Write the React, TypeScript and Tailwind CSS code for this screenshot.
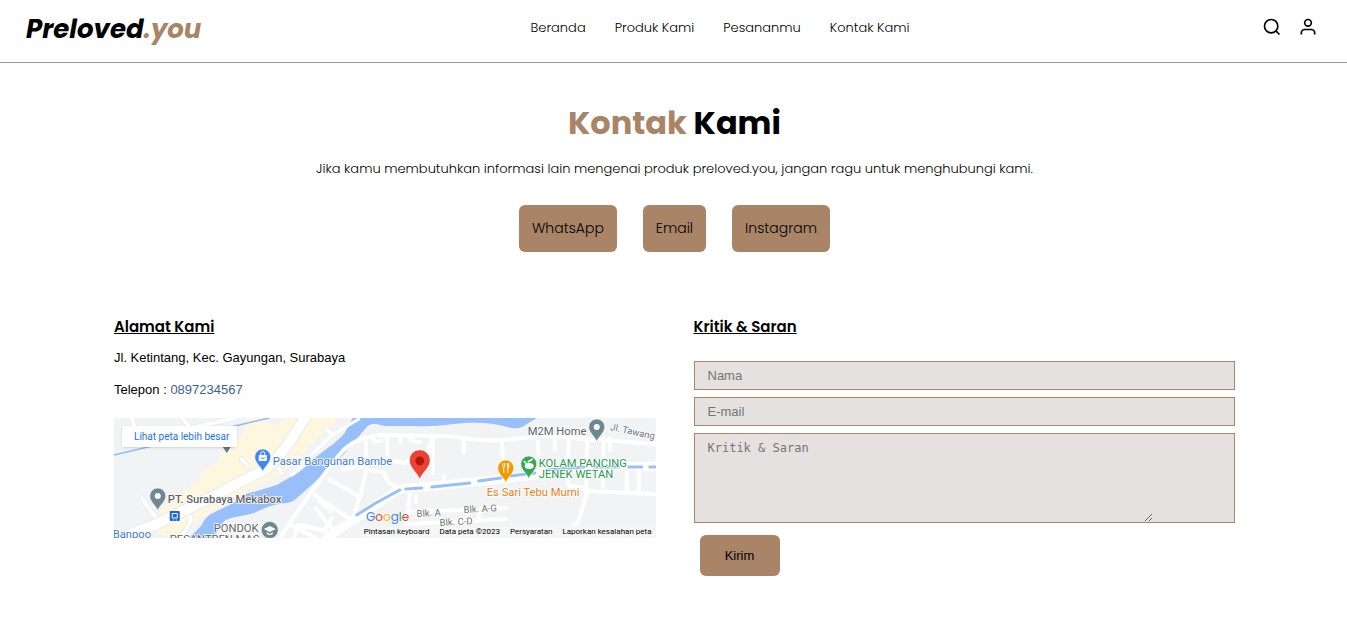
import type { ReactNode } from "react";

const navLinks = ["Beranda", "Produk Kami", "Pesananmu", "Kontak Kami"];
const contacts = ["WhatsApp", "Email", "Instagram"];

function Icon({ children }: { children: ReactNode }) {
  return (
    <svg viewBox="0 0 24 24" className="size-5" fill="none" stroke="currentColor" strokeWidth="2" aria-hidden="true">
      {children}
    </svg>
  );
}

function Pin({ x, y, color, scale = 1, children }: { x: number; y: number; color: string; scale?: number; children?: ReactNode }) {
  return (
    <g transform={`translate(${x} ${y}) scale(${scale})`}>
      <path d="M0 0C-1-5-8-9-8-15a8 8 0 0 1 16 0C8-9 1-5 0 0Z" fill={color} stroke="#fff" strokeWidth="0.6" />
      {children}
    </g>
  );
}

function MapDrawing() {
  return (
    <svg viewBox="0 0 542 120" preserveAspectRatio="xMidYMid slice" className="block h-full w-full" role="img" aria-label="Peta Surabaya">
      <rect width="542" height="120" fill="#f1f3f4" />
      <path d="M136 0L130 12L120 29L104 39L105 44L85 55L87 62L64 76L48 90L38 106L46 118H64L80 105L127 75L167 58L205 19L226 0Z" fill="#fef7e0" />
      <path d="M170 0L163 7L155 5L148 0Z" fill="#f1f3f4" />

      <path d="M75 120C80 115 84 112 88 107C91 100 95 97 101 94L120 85C127 79 132 75 140 74L163 67L177 59C185 56 192 48 200 41C212 31 226 22 231 15L239 0H423L410 8C404 12 396 10 390 8C374 4 358 4 340 6C320 9 306 8 290 8H272C264 7 259 3 253 9L230 36L200 65L182 81C178 85 172 85 166 86C156 87 150 91 140 95C130 98 118 99 112 102C106 106 104 114 100 120Z" fill="#98bffa" />

      <g fill="none" strokeLinecap="round" strokeLinejoin="round">
        <g stroke="#dfe3e8" strokeWidth="5">
          <path d="M28 80L43 101M128 41L134 48M163 48L168 55M69 120C67 114 78 108 77 100L73 93M18 0L22 12M68 0L77 10L122 0" />
        </g>
        <g stroke="#fff" strokeWidth="4">
          <path d="M28 80L43 101M128 41L134 48M163 48L168 55M69 120C67 114 78 108 77 100L73 93M18 0L22 12M68 0L77 10L122 0" />
        </g>

        <path d="M-4 124L43 106L100 78L150 52C164 43 178 23 193 -4" stroke="#e8eaed" strokeWidth="12" />
        <path d="M-4 124L43 106L100 78L150 52C164 43 178 23 193 -4" stroke="#fff" strokeWidth="10" />
        <path d="M178 57L192 43L217 18L245 1M213 11L218 17" stroke="#fff" strokeWidth="3" />

        <g stroke="#fff" strokeWidth="4">
          <path d="M166 120L180 99L194 79C205 65 216 47 229 33C240 22 252 18 272 17L330 18C350 19 366 24 388 22L430 18L542 26" />
          <path d="M252 20L253 50L247 76L240 98" />
          <path d="M253 52L270 54L274 64L285 70L302 69" />
          <path d="M229 51L252 48M215 61L245 78M201 77L235 100M202 90L222 116M178 107L202 120M218 100L211 112L190 108" />
          <path d="M273 18L274 42L291 45M259 18L261 24L268 23M286 17L287 24M297 17V23L306 24M319 20L314 34L309 44L294 43" />
          <path d="M319 20V55M330 58L329 70M350 22V34M388 22L390 54M424 24L425 40M441 21V32M455 23L454 67L474 71" />
          <path d="M474 20L472 50L473 76L464 105L460 106M490 20L489 69M513 50V73M525 48V75M472 73L542 76M496 20V32" />
          <path d="M296 75L292 117M293 94L392 90M296 106L392 101M366 93L365 102M302 78V84" />
          <path d="M205 83L218 93M180 120L184 107L211 113" />
        </g>
        <path d="M213 120C229 108 243 101 260 88L286 71L360 64L421 57C453 49 485 49 542 48" stroke="#fff" strokeWidth="9" />
        <path d="M243 97L262 85L286 72" stroke="#98bffa" strokeWidth="3" />
        <path d="M292 71L308 70M318 69L356 65M365 63L387 60M396 58L421 55M433 52L470 49M480 49L505 49M515 49L528 49M536 49L542 49" stroke="#98bffa" strokeWidth="3" />
        <path d="M0 37L60 23L121 8L155 0" stroke="#8db9f9" strokeWidth="1.5" />
      </g>

      <g className="font-['Roboto','Noto_Sans',sans-serif]" strokeLinejoin="round" paintOrder="stroke" stroke="#fff" strokeWidth="1.5">
        <g fontSize="11.2" fill="#3f7bd6">
          <text x="159" y="47">Pasar Bangunan Bambe</text>
          <text x="-1" y="120">Banpoo</text>
        </g>
        <g fontSize="11.2" fill="#5f6368">
          <text x="54" y="85" fontWeight="500">PT. Surabaya Mekabox</text>
          <text x="100" y="114">PONDOK</text>
          <text x="56" y="125">PESANTREN MAS</text>
          <text x="414" y="17">M2M Home</text>
        </g>
        <g fontSize="9.5" fill="#70757a">
          <text x="303" y="99" transform="rotate(-3 303 99)">Blk. A</text>
          <text x="350" y="95" transform="rotate(-3 350 95)">Blk. A-G</text>
          <text x="326" y="108" transform="rotate(-3 326 108)">Blk. C-D</text>
          <text x="496" y="12" transform="rotate(12 496 12)">Jl. Tawang</text>
        </g>
        <g fontSize="11.2" fill="#279a4b">
          <text x="425" y="49">KOLAM PANCING</text>
          <text x="425" y="60">JENEK WETAN</text>
        </g>
        <text x="373" y="78" fontSize="11.2" fill="#e58212">Es Sari Tebu Murni</text>
      </g>

      <path d="M109 29L113 35L117 29Z" fill="#607d8b" />
      <Pin x={149} y={54} color="#4285f4">
        <path d="M-4-17H4V-11H-4Z" fill="#fff" />
        <path d="M-2-17V-18.500A2 2 0 0 1 2-18.500V-17" fill="none" stroke="#fff" />
        <path d="M-2-14.500Q0-12 2-14.500" fill="none" stroke="#4285f4" />
      </Pin>
      <Pin x={44} y={93} color="#6f8791"><circle cy="-15" r="3" fill="#fff" /></Pin>
      <Pin x={483} y={24} color="#6f8791"><circle cy="-15" r="3" fill="#fff" /></Pin>
      <Pin x={392} y={65} color="#f29900">
        <path d="M-3-20V-16M-1-20V-16M-2-16V-10M2-20V-10M3-20V-15" stroke="#fff" fill="none" />
      </Pin>
      <Pin x={415} y={61} color="#34a853">
        <ellipse cx="0.500" cy="-13" rx="4.500" ry="3" fill="#fff" />
        <path d="M-5-18L-2-15M-1-17L4-20" stroke="#fff" strokeWidth="1.500" />
      </Pin>
      <Pin x={306} y={62} color="#ea4335" scale={1.32}><circle cy="-14.5" r="3.3" fill="#b31412" /></Pin>
      <circle cx="156" cy="112" r="8.5" fill="#6f8791" stroke="#fff" strokeWidth="0.6" />
      <path d="M150 111L156 108L162 111L156 114ZM153 114V116Q156 118 159 116V114L156 116Z" fill="#fff" />
      <rect x="56" y="93" width="10" height="10" rx="1" fill="#1a66d2" />
      <path d="M58.500 95.500H63.500V100H58.500ZM59 102H60M62 102H63" fill="none" stroke="#fff" />
    </svg>
  );
}

function MapPanel() {
  return (
    <div className="relative mt-[18px] h-[120px] overflow-hidden">
      <MapDrawing />
      <a href="#peta" className="absolute left-2 top-2 bg-white py-1 pl-3 pr-2 font-['Roboto','Noto_Sans',sans-serif] text-[10px] leading-[13px] text-[#1a73e8] shadow-sm">
        Lihat peta lebih besar
      </a>
      <span className="absolute bottom-3 left-[252px] font-['Poppins',sans-serif] text-xs leading-[18px] text-[#4285f4]" aria-label="Google">
        G<span className="text-[#ea4335]">o</span><span className="text-[#fbbc04]">o</span>g<span className="text-[#34a853]">l</span><span className="text-[#ea4335]">e</span>
      </span>
      <div className="absolute bottom-0 right-0 flex gap-[10px] bg-[#f5f5f5]/70 px-1 font-['Roboto','Noto_Sans',sans-serif] text-[8px] leading-[12px] text-black">
        <button type="button">Pintasan keyboard</button>
        <span>Data peta ©2023</span>
        <a href="#persyaratan">Persyaratan</a>
        <a href="#laporkan">Laporkan kesalahan peta</a>
      </div>
    </div>
  );
}

export default function App() {
  return (
    <div className="bg-white font-['Poppins','Inter',sans-serif] text-black">
      <header className="grid h-[63px] grid-cols-[1fr_auto_1fr] items-start border-b border-[#999] pl-[26px] pr-[29px]">
        <a href="#beranda" className="pt-[9px] text-[26px] font-bold italic leading-[40px]">
          Preloved<span className="text-[#a98467]">.you</span>
        </a>
        <nav className="flex gap-[29px] pl-24 pt-[18px] text-[13px] font-light leading-5">
          {navLinks.map((label) => (
            <a key={label} href="#menu">{label}</a>
          ))}
        </nav>
        <div className="flex justify-end gap-4 pt-[17px]">
          <button type="button" aria-label="Cari">
            <Icon><circle cx="11" cy="11" r="8" /><path d="M21 21l-4.350-4.350" /></Icon>
          </button>
          <button type="button" aria-label="Akun">
            <Icon><path d="M20 21v-2a4 4 0 0 0-4-4H8a4 4 0 0 0-4 4v2" /><circle cx="12" cy="7" r="4" /></Icon>
          </button>
        </div>
      </header>

      <main>
        <section className="flex flex-col items-center pl-0.5 pt-9 text-center">
          <h1 className="text-[32px] font-bold leading-[48px]">
            <span className="text-[#a98467]">Kontak</span> Kami
          </h1>
          <p className="mt-3 text-[13px] font-light leading-5">
            Jika kamu membutuhkan informasi lain mengenai produk preloved.you, jangan ragu untuk menghubungi kami.
          </p>
          <div className="mt-[26px] flex gap-[26px]">
            {contacts.map((label) => (
              <a key={label} href="#kontak" className="rounded-md bg-[#a98467] px-[13px] py-3 text-[14px] font-light leading-[23px]">
                {label}
              </a>
            ))}
          </div>
        </section>

        <section className="grid grid-cols-2 gap-[38px] pb-10 pl-[114px] pr-28 pt-16">
          <div className="font-['Liberation_Sans',sans-serif] text-[13px] leading-5">
            <h2 className="font-['Poppins','Inter',sans-serif] text-[15px] font-semibold leading-[22px] underline">Alamat Kami</h2>
            <p className="mt-[10px]">Jl. Ketintang, Kec. Gayungan, Surabaya</p>
            <p className="mt-3">
              Telepon : <a href="tel:0897234567" className="text-[#3c5f96]">0897234567</a>
            </p>
            <MapPanel />
          </div>

          <form className="font-['Liberation_Sans',sans-serif] text-[13px]">
            <h2 className="font-['Poppins','Inter',sans-serif] text-[15px] font-semibold leading-[22px] underline">Kritik &amp; Saran</h2>
            <div className="mt-[23px] flex flex-col gap-[7px]">
              <input type="text" aria-label="Nama" placeholder="Nama" className="h-[29px] border border-[#a98467] bg-[#e6e1e1] px-[13px] placeholder:text-[#757575]" />
              <input type="email" aria-label="E-mail" placeholder="E-mail" className="h-[29px] border border-[#a98467] bg-[#e6e1e1] px-[13px] placeholder:text-[#757575]" />
              <div className="border border-[#a98467] bg-[#e6e1e1]">
                <textarea
                  aria-label="Kritik & Saran"
                  placeholder="Kritik & Saran"
                  className="block h-[88px] w-[85%] resize bg-transparent px-[13px] py-[6px] font-['DejaVu_Sans_Mono',monospace] text-[12px] leading-4 placeholder:text-[#757575]"
                />
              </div>
            </div>
            <button type="submit" className="ml-[6px] mt-3 h-[41px] w-20 rounded-md bg-[#a98467]">Kirim</button>
          </form>
        </section>
      </main>
    </div>
  );
}
